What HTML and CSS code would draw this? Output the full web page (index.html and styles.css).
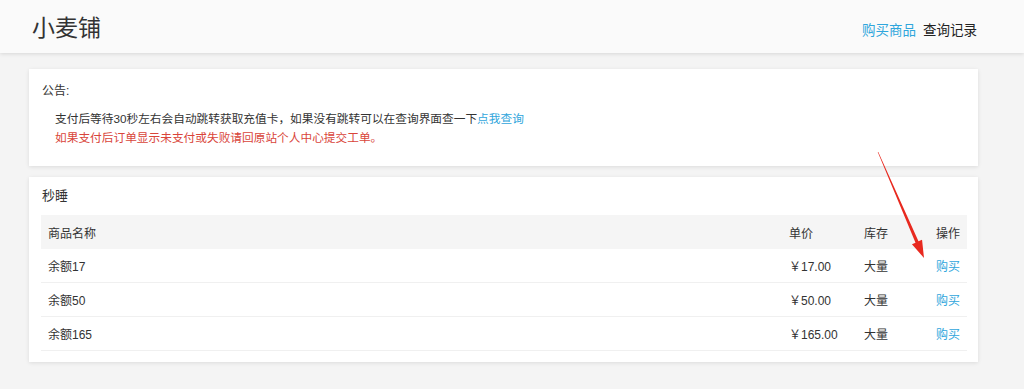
FILE: index.html
```html
<!DOCTYPE html>
<html lang="zh-CN">
<head>
    <meta charset="UTF-8">
    <meta name="viewport" content="width=device-width, initial-scale=1.0">
    <title>小麦铺</title>
    <link rel="stylesheet" href="styles.css">
</head>
<body>
    <header class="topbar">
        <div class="brand">小麦铺</div>
        <nav class="nav">
            <a class="nav-link active" href="#">购买商品</a>
            <a class="nav-link" href="#">查询记录</a>
        </nav>
    </header>

    <main class="container">
        <section class="card notice">
            <div class="notice-title">公告:</div>
            <div class="notice-body">
                <p>支付后等待30秒左右会自动跳转获取充值卡，如果没有跳转可以在查询界面查一下<a class="link" href="#">点我查询</a></p>
                <p class="warn">如果支付后订单显示未支付或失败请回原站个人中心提交工单。</p>
            </div>
        </section>

        <section class="card goods">
            <div class="goods-title">秒睡</div>
            <table class="goods-table">
                <colgroup>
                    <col class="col-name">
                    <col class="col-price">
                    <col class="col-stock">
                    <col class="col-action">
                </colgroup>
                <thead>
                    <tr>
                        <th>商品名称</th>
                        <th>单价</th>
                        <th>库存</th>
                        <th class="right">操作</th>
                    </tr>
                </thead>
                <tbody>
                    <tr>
                        <td>余额17</td>
                        <td>￥17.00</td>
                        <td>大量</td>
                        <td class="right"><a class="link" href="#">购买</a></td>
                    </tr>
                    <tr>
                        <td>余额50</td>
                        <td>￥50.00</td>
                        <td>大量</td>
                        <td class="right"><a class="link" href="#">购买</a></td>
                    </tr>
                    <tr>
                        <td>余额165</td>
                        <td>￥165.00</td>
                        <td>大量</td>
                        <td class="right"><a class="link" href="#">购买</a></td>
                    </tr>
                </tbody>
            </table>
        </section>
    </main>

    <!-- annotation arrow drawn over the page -->
    <svg class="arrow" width="64" height="118" viewBox="0 0 64 118">
        <polygon points="7.72,4.12 45.53,94.64 41.95,96.19 54,110 52.05,91.81 48.47,93.36 8.28,3.88" fill="#e8291f"/>
    </svg>
</body>
</html>
```

FILE: styles.css
```css
body {
    margin: 0;
    padding: 0;
    font-family: "Liberation Sans", "Noto Sans CJK SC", sans-serif;
    font-size: 12px;
    color: #333;
    background-color: #f4f4f4;
    position: relative;
    min-height: 389px;
}
a {
    text-decoration: none;
}
.topbar {
    height: 53px;
    display: flex;
    align-items: center;
    justify-content: space-between;
    padding: 0 47px 0 32px;
    background-color: #fafafa;
    box-shadow: 0 1px 4px rgba(0, 0, 0, 0.12);
}
.brand {
    font-family: "Noto Sans CJK SC", sans-serif;
    font-size: 23px;
    color: #333;
    margin-top: -2px;
}
.nav {
    display: flex;
    gap: 7px;
    margin-top: 4px;
}
.nav-link {
    font-size: 13.5px;
    color: #222;
}
.nav-link.active {
    color: #2fa6dc;
}
.container {
    width: 949px;
    margin: 16px 0 0 29px;
    display: flex;
    flex-direction: column;
    gap: 11px;
}
.card {
    background-color: #fff;
    box-shadow: 0 1px 4px rgba(0, 0, 0, 0.1);
}
.notice {
    height: 97px;
    box-sizing: border-box;
    padding: 14px 13px;
}
.notice-title {
    line-height: 16px;
}
.notice-body {
    margin-top: 10px;
    padding-left: 13px;
    font-size: 11.7px;
}
.notice-body p {
    margin: 0;
    line-height: 19px;
}
.link {
    color: #2fa6dc;
}
.warn {
    color: #d9453a;
}
.goods {
    height: 185px;
    box-sizing: border-box;
    padding: 10px 11px 0 12px;
}
.goods-title {
    font-size: 13px;
    line-height: 18px;
    padding-left: 1px;
}
.goods-table {
    width: 100%;
    margin-top: 10px;
    border-collapse: collapse;
    table-layout: fixed;
}
.col-name {
    width: 741px;
}
.col-price {
    width: 75px;
}
.col-stock {
    width: 60px;
}
.goods-table th {
    height: 34px;
    padding: 0 7px;
    text-align: left;
    font-weight: normal;
    background-color: #f5f5f5;
}
.goods-table td {
    height: 33px;
    padding: 0 7px;
    border-bottom: 1px solid #f0f0f0;
}
.goods-table .right {
    text-align: right;
}
.arrow {
    position: absolute;
    left: 870px;
    top: 148px;
}
```
